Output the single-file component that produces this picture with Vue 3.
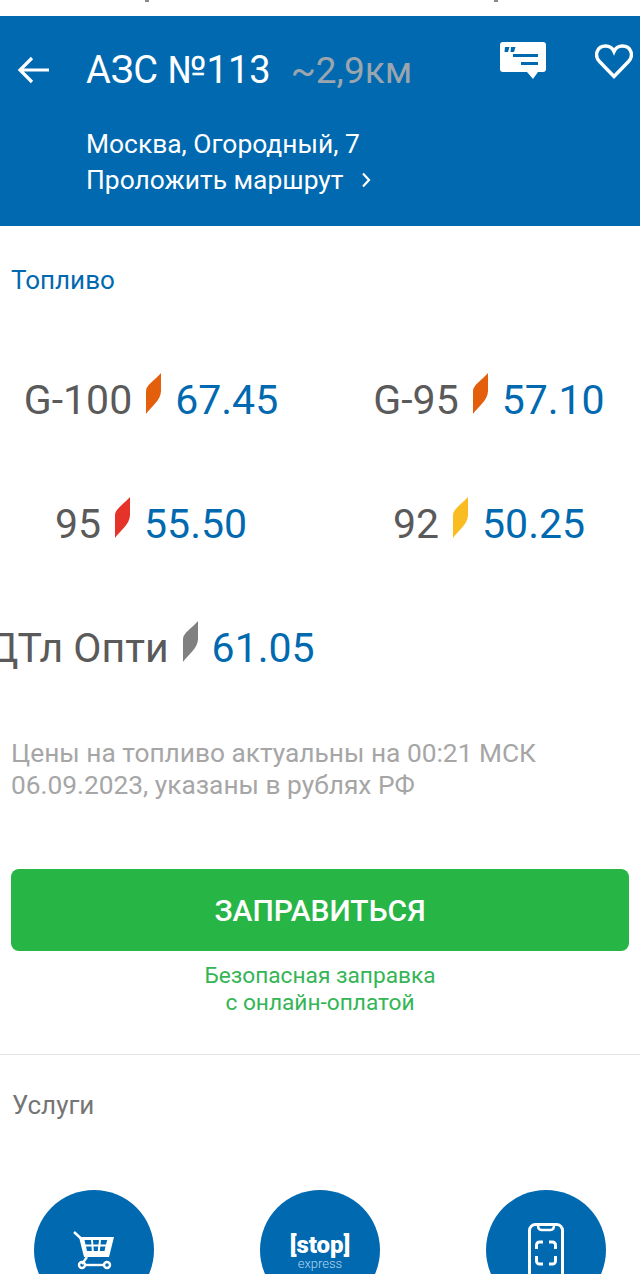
<template>
  <div class="page">
    <div class="status"><i></i><i></i></div>
    <header class="head">
      <div class="head-top">
        <svg class="back" width="32" height="28" viewBox="0 0 32 28" fill="none" stroke="#fff" stroke-width="3.2">
          <path d="M32 14H3M15 2 3 14l12 12" />
        </svg>
        <h1 class="title">АЗС №113</h1>
        <span class="dist">~2,9км</span>
        <div class="head-icons">
          <svg width="46" height="37" viewBox="0 0 46 37">
            <path fill="#fff" d="M3 0h40a3 3 0 0 1 3 3v24a3 3 0 0 1-3 3h-5l-5 7-6-7H3a3 3 0 0 1-3-3V3a3 3 0 0 1 3-3z" />
            <path fill="#0069b0" d="M5 5h4.500L8 10H4.500zM11 5h4.500L14 10h-3.500zM13 12h25v3H13zM21 20h17v3H21z" />
          </svg>
          <svg class="heart" width="38" height="35" viewBox="0 0 38 35" fill="none" stroke="#fff" stroke-width="3.400">
            <path d="M19 32.500 4.500 17.500C-1.500 11 2.500 2 10.500 2c4 0 7 2 8.500 5.500C20.500 4 23.500 2 27.500 2c8 0 12 9 6 15.500z" />
          </svg>
        </div>
      </div>
      <div class="address">Москва, Огородный, 7</div>
      <div class="route">
        <span>Проложить маршрут</span>
        <svg width="10" height="16" viewBox="0 0 10 16" fill="none" stroke="#fff" stroke-width="2.200">
          <path d="m2 1.500 6 6.500-6 6.500" />
        </svg>
      </div>
    </header>

    <section class="fuel">
      <h2 class="fuel-title">Топливо</h2>
      <div class="fuel-grid">
        <div v-for="f in fuels" :key="f.name" class="fuel-item">
          <span class="fuel-name">{{ f.name }}</span>
          <svg class="leaf" width="15" height="41" viewBox="0 0 15 41">
            <path :fill="f.color" d="M15 0v18C15 27 5 34 0 41V18C0 12 9 7 15 0z" />
          </svg>
          <span class="fuel-price">{{ f.price }}</span>
        </div>
      </div>
      <p class="note">Цены на топливо актуальны на 00:21 МСК<br />06.09.2023, указаны в рублях РФ</p>
      <button class="fill-btn">ЗАПРАВИТЬСЯ</button>
      <p class="safe">Безопасная заправка<br />с онлайн-оплатой</p>
    </section>

    <section class="services">
      <h2 class="services-title">Услуги</h2>
      <div class="service-row">
        <div class="circle">
          <svg width="42" height="40" viewBox="0 0 42 40" fill="none" stroke="#fff" stroke-width="2.400">
            <path d="M1 2l6.500 6" />
            <path
              fill="#fff"
              stroke="none"
              fill-rule="evenodd"
              d="M6 7h35l-5 20H11zM11.500 10l1 4.500h6l-.5-4.500zM20 10l.3 4.500h5.200l.5-4.500zM28 10l-.5 4.500h5.500l1.200-4.500zM13 16.500l1 4.500h4.800l-.3-4.500zM20.500 16.500l.3 4.500h4l.4-4.500zM27.300 16.500l-.5 4.500h4.700l1-4.500z"
            />
            <path d="M14 27l-5 7" />
            <path d="M12 35h19" />
            <circle cx="9" cy="35" r="3" />
            <circle cx="34" cy="35" r="3" />
          </svg>
        </div>
        <div class="circle">
          <div class="stop">
            <span class="stop-word">[stop]</span>
            <span class="stop-sub">express</span>
          </div>
        </div>
        <div class="circle">
          <svg width="38" height="54" viewBox="0 0 38 54" fill="none" stroke="#fff" stroke-width="3">
            <rect x="2.500" y="1.500" width="33" height="64" rx="6" />
            <path d="M11 2c0 3 1 5 3.500 5h9C26 7 27 5 27 2" stroke-width="2.500" />
            <path d="M9.500 26v-4a3 3 0 0 1 3-3H16M22 19h3.500a3 3 0 0 1 3 3v4M9.500 33v5a3 3 0 0 0 3 3H16M22 41h3.500a3 3 0 0 0 3-3v-5" />
          </svg>
        </div>
      </div>
    </section>
  </div>
</template>

<script setup>
const fuels = [
  { name: 'G-100', price: '67.45', color: '#e35f0c' },
  { name: 'G-95', price: '57.10', color: '#e35f0c' },
  { name: '95', price: '55.50', color: '#e5332a' },
  { name: '92', price: '50.25', color: '#f9bd21' },
  { name: 'ДТл Опти', price: '61.05', color: '#808080' }
]
</script>

<style>
html, body {
  background: #fff;
  overflow: hidden;
}
</style>

<style scoped>
.page {
  width: 640px;
  height: 1274px;
  overflow: hidden;
  font-family: Roboto, 'Liberation Sans', sans-serif;
  color: #5a5a5a;
}
.status {
  height: 16px;
  display: flex;
  gap: 345px;
  padding-left: 145px;
}
.status i {
  width: 4px;
  height: 2px;
  background: #8a8a8a;
}
.head {
  height: 210px;
  box-sizing: border-box;
  background: #0069b0;
  color: #fff;
  padding: 26px 7px 0 0;
}
.head-top {
  display: flex;
  align-items: center;
  height: 56px;
  margin-bottom: 28px;
  padding-left: 17px;
}
.back {
  margin-right: 37px;
  flex: none;
}
.title {
  margin: 0;
  font-size: 38px;
  font-weight: 400;
}
.dist {
  margin-left: 20px;
  font-size: 37px;
  color: #9aa5ae;
}
.head-icons {
  margin-left: auto;
  align-self: flex-start;
  display: flex;
  gap: 49px;
}
.heart {
  margin-top: 2px;
}
.address,
.route {
  padding-left: 86px;
  font-size: 26.4px;
  line-height: 36px;
}
.route {
  display: flex;
  align-items: center;
  gap: 17px;
}
.fuel {
  padding: 0 11px;
}
.fuel-title {
  margin: 38px 0 0;
  font-size: 26px;
  line-height: 32px;
  font-weight: 400;
  color: #0069b0;
}
.fuel-grid {
  display: grid;
  grid-template-columns: 302px 302px;
  column-gap: 36px;
  row-gap: 73px;
  margin: 77px -11px 0;
}
.fuel-item {
  display: flex;
  justify-content: center;
  align-items: baseline;
  font-size: 41px;
  line-height: 48px;
  gap: 14px;
  white-space: nowrap;
}
.leaf {
  flex: none;
}
.fuel-price {
  color: #0069b0;
}
.note {
  margin: 65px 0 0;
  font-size: 26.3px;
  line-height: 32px;
  color: #a6a6a6;
}
.fill-btn {
  display: block;
  width: 100%;
  height: 82px;
  margin-top: 68px;
  border: 0;
  border-radius: 8px;
  background: #27b545;
  color: #fff;
  font: 500 30px Roboto, sans-serif;
}
.safe {
  margin: 11px 0 0;
  font-size: 22.7px;
  line-height: 27px;
  text-align: center;
  color: #34b556;
}
.services {
  margin-top: 38px;
  border-top: 1px solid #e4e4e4;
}
.services-title {
  margin: 34px 0 0 12px;
  font-size: 26px;
  line-height: 32px;
  font-weight: 400;
  color: #757575;
}
.service-row {
  display: flex;
  gap: 106px;
  margin: 69px 0 0 34px;
}
.circle {
  width: 120px;
  height: 120px;
  border-radius: 50%;
  background: #0069b0;
  display: flex;
  justify-content: center;
  align-items: center;
  flex: none;
}
.stop {
  display: flex;
  flex-direction: column;
  align-items: center;
  color: #fff;
  margin-top: 3px;
}
.stop-word {
  font-size: 24px;
  font-weight: 900;
  line-height: 24px;
}
.stop-sub {
  font-size: 13px;
  font-weight: 300;
  line-height: 13px;
  color: #b4d6ee;
}
</style>
